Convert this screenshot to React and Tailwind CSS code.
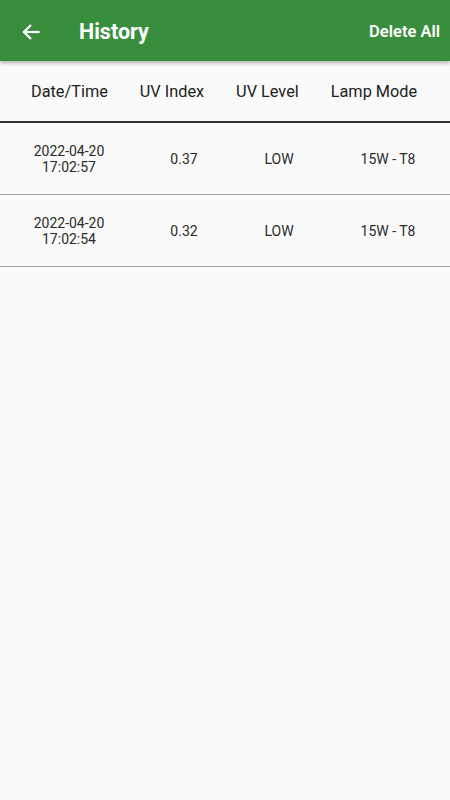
import React from 'react';

const rows = [
  { date: '2022-04-20', time: '17:02:57', index: '0.37', level: 'LOW', mode: '15W - T8' },
  { date: '2022-04-20', time: '17:02:54', index: '0.32', level: 'LOW', mode: '15W - T8' },
];

const App = () => {
  return (
    <div className="w-[450px] h-[800px] bg-[#fafafa] overflow-hidden" style={{ fontFamily: 'Roboto, "Noto Sans", sans-serif' }}>
      {/* App bar */}
      <header className="h-[61px] pt-[3px] bg-[#388e3c] flex items-center relative z-10 shadow-[0_2px_4px_rgba(0,0,0,0.3)]">
        <button className="w-[62px] h-full flex items-center justify-center">
          <svg width="20" height="20" viewBox="0 0 24 24" fill="none" stroke="white" strokeWidth="2.6" strokeLinecap="square">
            <path d="M21 12H4" />
            <path d="M11 4.5L3.5 12L11 19.5" />
          </svg>
        </button>
        <h1 className="ml-[17px] text-white text-[21.5px] font-bold">History</h1>
        <button className="ml-auto mr-[10px] text-white text-[16.5px] font-semibold">Delete All</button>
      </header>

      {/* Table header */}
      <div className="h-[62px] pt-[2px] flex items-center pl-[31px] gap-[32px] text-[16.3px] text-[#212121] border-b-2 border-[#333]">
        <span>Date/Time</span>
        <span>UV Index</span>
        <span>UV Level</span>
        <span>Lamp Mode</span>
      </div>

      {/* Table rows */}
      {rows.map((r, i) => (
        <div key={i} className="h-[72px] grid grid-cols-[138px_92px_98px_120px] items-center text-[14px] leading-[16px] text-[#2a2a2a] border-b border-[#9e9e9e]">
          <div className="text-center">
            <div>{r.date}</div>
            <div>{r.time}</div>
          </div>
          <div className="text-center">{r.index}</div>
          <div className="text-center">{r.level}</div>
          <div className="text-center">{r.mode}</div>
        </div>
      ))}
    </div>
  );
};

export default App;
